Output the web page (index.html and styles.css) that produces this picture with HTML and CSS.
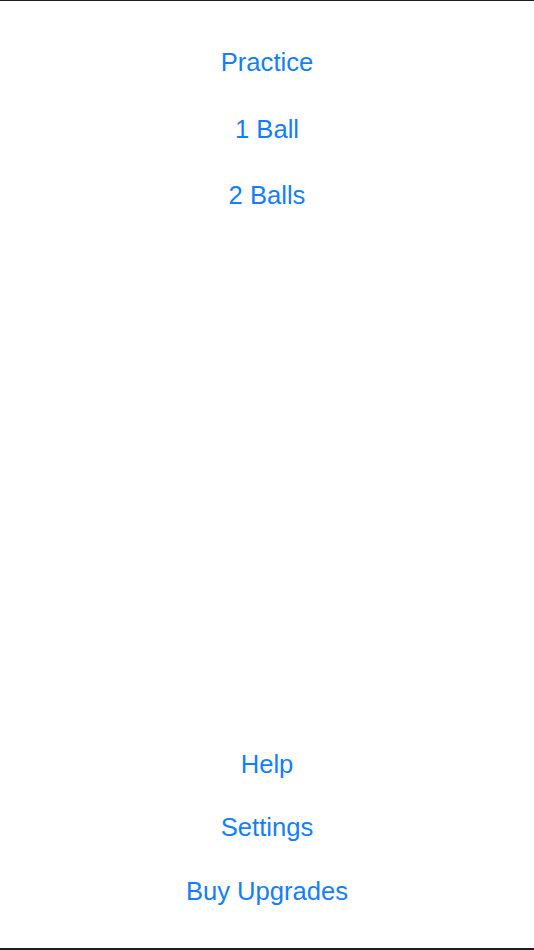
FILE: index.html
```html
<!DOCTYPE html>
<html lang="en">
<head>
<meta charset="utf-8">
<title>Menu</title>
<link rel="stylesheet" href="styles.css">
</head>
<body>
<div class="screen">
  <nav class="menu menu-top">
    <a class="item" href="#">Practice</a>
    <a class="item" href="#">1 Ball</a>
    <a class="item" href="#">2 Balls</a>
  </nav>
  <nav class="menu menu-bottom">
    <a class="item" href="#">Help</a>
    <a class="item" href="#">Settings</a>
    <a class="item" href="#">Buy Upgrades</a>
  </nav>
</div>
</body>
</html>
```
FILE: styles.css
```css
html, body {
  margin: 0;
  padding: 0;
  height: 100%;
  background: #ffffff;
}
.screen {
  box-sizing: border-box;
  height: 100vh;
  border-top: 1px solid #1c1c1c;
  border-bottom: 2px solid #1c1c1c;
  padding: 28px 0 25px;
  display: flex;
  flex-direction: column;
  justify-content: space-between;
  font-family: "Liberation Sans", Arial, sans-serif;
  font-size: 25.6px;
}
.menu {
  display: flex;
  flex-direction: column;
  align-items: center;
}
.item {
  color: #147efb;
  text-decoration: none;
  text-align: center;
}
.menu-top .item {
  line-height: 66.67px;
}
.menu-bottom .item {
  line-height: 63.5px;
}
```
